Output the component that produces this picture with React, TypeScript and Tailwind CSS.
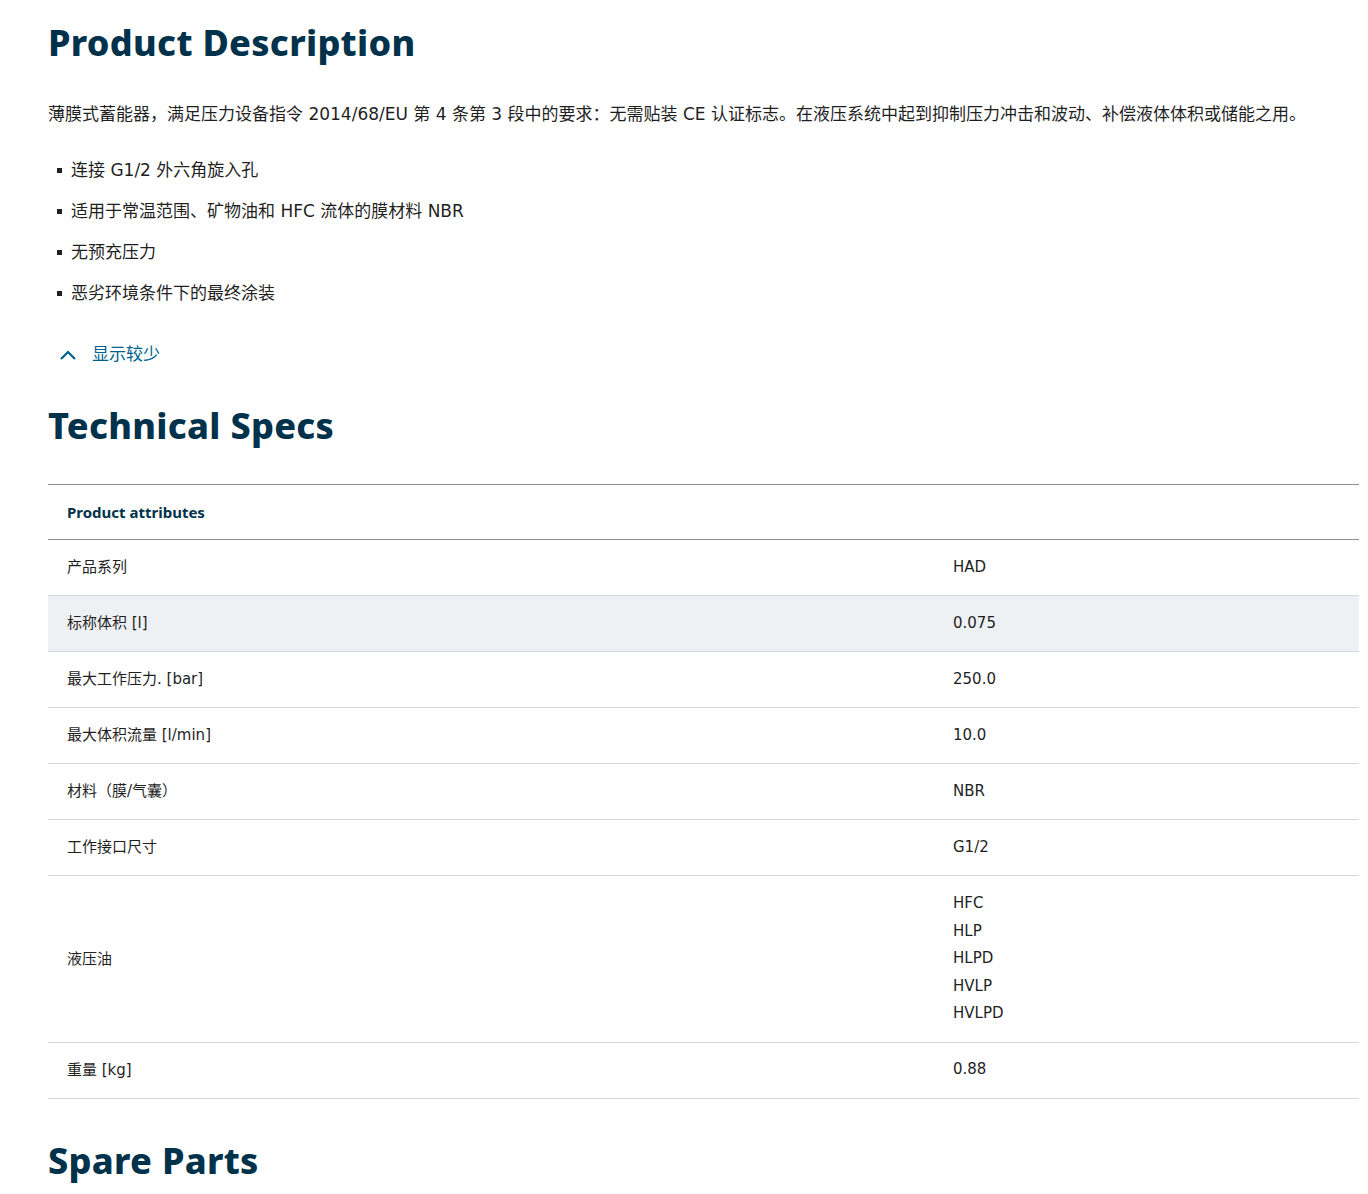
const font = { fontFamily: '"DejaVu Sans", "Noto Sans CJK SC", sans-serif' };
const head = { fontFamily: '"Noto Sans", sans-serif' };

const rows: [string, string[]][] = [
  ["产品系列", ["HAD"]],
  ["标称体积 [l]", ["0.075"]],
  ["最大工作压力. [bar]", ["250.0"]],
  ["最大体积流量 [l/min]", ["10.0"]],
  ["材料（膜/气囊）", ["NBR"]],
  ["工作接口尺寸", ["G1/2"]],
  ["液压油", ["HFC", "HLP", "HLPD", "HVLP", "HVLPD"]],
  ["重量 [kg]", ["0.88"]],
];

const bullets = [
  "连接 G1/2 外六角旋入孔",
  "适用于常温范围、矿物油和 HFC 流体的膜材料 NBR",
  "无预充压力",
  "恶劣环境条件下的最终涂装",
];

export default function App() {
  return (
    <div className="h-[1194px] overflow-hidden bg-white pl-12 pr-[9px] text-[#1f1f1f]" style={font}>
      <h1 className="pt-[21px] text-[36px] font-extrabold leading-[44px] tracking-[0.3px] text-[#00324b]" style={head}>Product Description</h1>
      <p className="mt-[36px] text-[17px] leading-[27px]">
        薄膜式蓄能器，满足压力设备指令 2014/68/EU 第 4 条第 3 段中的要求：无需贴装 CE 认证标志。在液压系统中起到抑制压力冲击和波动、补偿液体体积或储能之用。
      </p>
      <ul className="mt-[29px] flex flex-col gap-[14px]">
        {bullets.map((b) => (
          <li key={b} className="flex items-center text-[17px] leading-[27px]">
            <span className="ml-[9px] mr-[9px] h-[5px] w-[5px] bg-[#1f1f1f]" />
            {b}
          </li>
        ))}
      </ul>
      <button className="mt-[34px] flex items-center gap-[14px] pl-[10px] text-[17px] leading-[27px] text-[#00628c]">
        <svg width="20" height="20" viewBox="0 0 20 20" fill="none" stroke="#00628c" strokeWidth="2.2">
          <path d="M3 14 L10 7 L17 14" />
        </svg>
        显示较少
      </button>
      <h2 className="mt-[36px] text-[36px] font-extrabold leading-[44px] tracking-[0.3px] text-[#00324b]" style={head}>Technical Specs</h2>
      <div className="mt-[36px] border-t border-[#8a9097]">
        <div className="flex h-[55px] items-center border-b border-[#8a9097] px-[19px] text-[15px] font-bold text-[#00324b]" style={head}>
          Product attributes
        </div>
        {rows.map(([k, v], i) => (
          <div
            key={k}
            className={`flex items-center border-b border-[#d5d8dc] text-[15px] ${i === 1 ? "bg-[#eef1f3]" : ""} ${v.length > 1 ? "py-[14px]" : "h-[56px]"}`}
          >
            <div className="w-[905px] shrink-0 pl-[19px]">{k}</div>
            <div className="flex flex-col leading-[27.5px]">
              {v.map((x) => (
                <span key={x}>{x}</span>
              ))}
            </div>
          </div>
        ))}
      </div>
      <h2 className="mt-[40px] text-[36px] font-extrabold leading-[44px] tracking-[0.3px] text-[#00324b]" style={head}>Spare Parts</h2>
    </div>
  );
}
